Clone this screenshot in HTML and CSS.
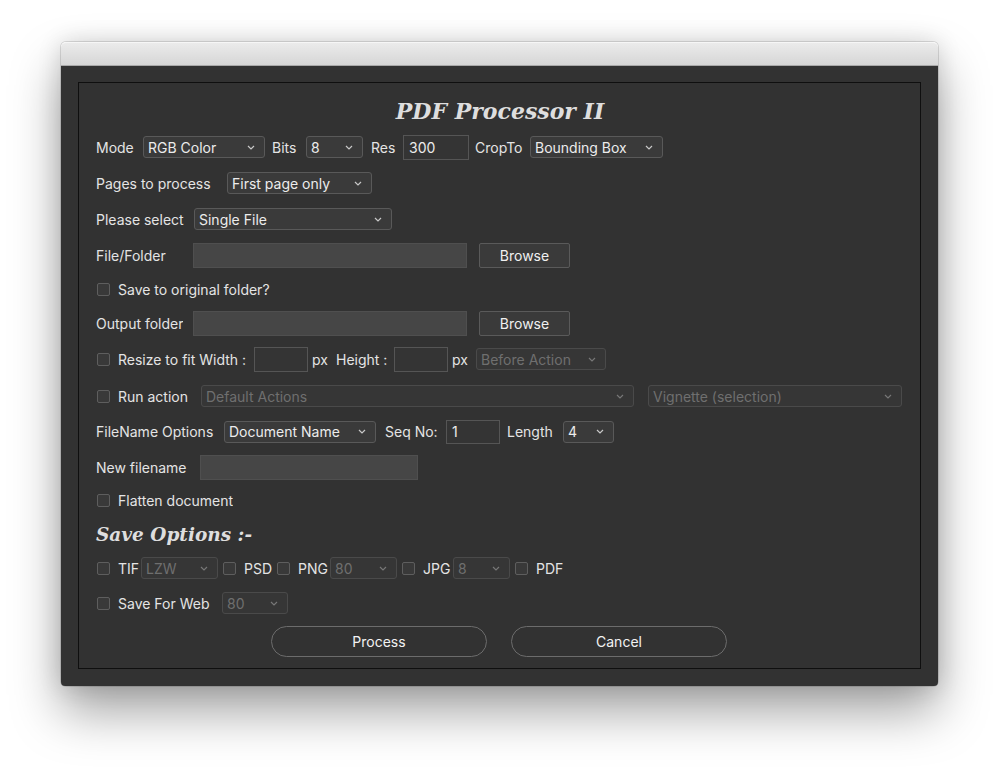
FILE: index.html
```html
<!DOCTYPE html>
<html>
<head>
<meta charset="utf-8">
<link rel="stylesheet" href="styles.css">
</head>
<body>
<div class="window">
  <div class="titlebar"></div>
  <div class="content">
    <div class="panel">
      <h1 class="title">PDF Processor II</h1>

      <div class="row r36">
        <span class="lbl w-mode">Mode</span>
        <div class="select w-rgb"><span class="val">RGB Color</span><svg class="chev" viewBox="0 0 8 5"><path d="M1 1l3 3 3-3"/></svg></div>
        <span class="lbl w-bits">Bits</span>
        <div class="select w-bitsel"><span class="val">8</span><svg class="chev" viewBox="0 0 8 5"><path d="M1 1l3 3 3-3"/></svg></div>
        <span class="lbl w-res">Res</span>
        <div class="field w-resin"><span class="val">300</span></div>
        <span class="lbl w-crop">CropTo</span>
        <div class="select w-cropsel"><span class="val">Bounding Box</span><svg class="chev" viewBox="0 0 8 5"><path d="M1 1l3 3 3-3"/></svg></div>
      </div>

      <div class="row r36">
        <span class="lbl w-pages">Pages to process</span>
        <div class="select w-pagesel"><span class="val">First page only</span><svg class="chev" viewBox="0 0 8 5"><path d="M1 1l3 3 3-3"/></svg></div>
      </div>

      <div class="row r36">
        <span class="lbl w-please">Please select</span>
        <div class="select w-single"><span class="val">Single File</span><svg class="chev" viewBox="0 0 8 5"><path d="M1 1l3 3 3-3"/></svg></div>
      </div>

      <div class="row r36">
        <span class="lbl w-folder">File/Folder</span>
        <div class="field fill w-path"></div>
        <div class="btn">Browse</div>
      </div>

      <div class="row r33">
        <span class="cb"></span><span class="lbl">Save to original folder?</span>
      </div>

      <div class="row r34">
        <span class="lbl w-folder">Output folder</span>
        <div class="field fill w-path"></div>
        <div class="btn">Browse</div>
      </div>

      <div class="row r38">
        <span class="cb"></span><span class="lbl w-resize">Resize to fit Width :</span>
        <div class="field w-dim"></div>
        <span class="lbl w-px">px</span>
        <span class="lbl w-height">Height :</span>
        <div class="field w-dim"></div>
        <span class="lbl w-px">px</span>
        <div class="select off w-before"><span class="val">Before Action</span><svg class="chev" viewBox="0 0 8 5"><path d="M1 1l3 3 3-3"/></svg></div>
      </div>

      <div class="row r36">
        <span class="cb"></span><span class="lbl w-run">Run action</span>
        <div class="select off w-actions"><span class="val">Default Actions</span><svg class="chev" viewBox="0 0 8 5"><path d="M1 1l3 3 3-3"/></svg></div>
        <div class="select off w-vignette"><span class="val">Vignette (selection)</span><svg class="chev" viewBox="0 0 8 5"><path d="M1 1l3 3 3-3"/></svg></div>
      </div>

      <div class="row r35">
        <span class="lbl w-fname">FileName Options</span>
        <div class="select w-docname"><span class="val">Document Name</span><svg class="chev" viewBox="0 0 8 5"><path d="M1 1l3 3 3-3"/></svg></div>
        <span class="lbl w-seq">Seq No:</span>
        <div class="field w-seqin"><span class="val">1</span></div>
        <span class="lbl w-len">Length</span>
        <div class="select w-lensel"><span class="val">4</span><svg class="chev" viewBox="0 0 8 5"><path d="M1 1l3 3 3-3"/></svg></div>
      </div>

      <div class="row r36">
        <span class="lbl w-newname">New filename</span>
        <div class="field fill w-newin"></div>
      </div>

      <div class="row r30">
        <span class="cb"></span><span class="lbl">Flatten document</span>
      </div>

      <h2 class="subtitle">Save Options :-</h2>

      <div class="row r30">
        <span class="cb"></span><span class="lbl w-tif">TIF</span>
        <div class="select off w-lzw"><span class="val">LZW</span><svg class="chev" viewBox="0 0 8 5"><path d="M1 1l3 3 3-3"/></svg></div>
        <span class="cb after"></span><span class="lbl w-psd">PSD</span>
        <span class="cb"></span><span class="lbl w-png">PNG</span>
        <div class="select off w-pngsel"><span class="val">80</span><svg class="chev" viewBox="0 0 8 5"><path d="M1 1l3 3 3-3"/></svg></div>
        <span class="cb after"></span><span class="lbl w-jpg">JPG</span>
        <div class="select off w-jpgsel"><span class="val">8</span><svg class="chev" viewBox="0 0 8 5"><path d="M1 1l3 3 3-3"/></svg></div>
        <span class="cb after"></span><span class="lbl">PDF</span>
      </div>

      <div class="row r40">
        <span class="cb"></span><span class="lbl w-web">Save For Web</span>
        <div class="select off w-websel"><span class="val">80</span><svg class="chev" viewBox="0 0 8 5"><path d="M1 1l3 3 3-3"/></svg></div>
      </div>

      <div class="actions">
        <div class="pill">Process</div>
        <div class="pill">Cancel</div>
      </div>
    </div>
  </div>
</div>
</body>
</html>
```

FILE: styles.css
```css
* { box-sizing: border-box; }

html, body {
  margin: 0;
  padding: 0;
  background: #ffffff;
}

body {
  font-family: "Inter", "Liberation Sans", sans-serif;
  font-size: 14px;
  color: #e4e4e4;
  width: 999px;
  height: 767px;
  overflow: hidden;
}

.window {
  margin: 42px 0 0 61px;
  width: 877px;
  height: 644px;
  border-radius: 5px;
  box-shadow: 0 26px 50px rgba(0, 0, 0, 0.36), 0 0 24px rgba(0, 0, 0, 0.14), 0 0 0 1px rgba(0, 0, 0, 0.12);
  display: flex;
  flex-direction: column;
}

.titlebar {
  height: 24px;
  border-radius: 5px 5px 0 0;
  background: linear-gradient(#ebebeb, #d6d6d6);
  border-top: 1px solid #f6f6f6;
  border-bottom: 1px solid #a9a9a9;
}

.content {
  flex: 1;
  background: #323232;
  border-radius: 0 0 4px 4px;
  padding: 16px 17px 17px 17px;
  display: flex;
}

.panel {
  flex: 1;
  border: 1px solid #0f0f0f;
  padding: 14px 16px 0 17px;
  display: flex;
  flex-direction: column;
}

.title {
  margin: 0 0 4px 0;
  height: 28px;
  line-height: 28px;
  text-align: center;
  font-family: "DejaVu Serif", serif;
  font-style: italic;
  font-weight: bold;
  font-size: 22px;
  color: #dedede;
}

.subtitle {
  margin: 0;
  height: 38px;
  line-height: 40px;
  font-family: "DejaVu Serif", serif;
  font-style: italic;
  font-weight: bold;
  font-size: 18.5px;
  color: #dedede;
}

.row {
  display: flex;
  align-items: center;
  white-space: nowrap;
}
.r30 { height: 30px; }
.r33 { height: 33px; }
.r34 { height: 34px; }
.r35 { height: 35px; }
.r36 { height: 36px; }
.r38 { height: 38px; }
.r40 { height: 40px; }

.lbl {
  display: inline-block;
  white-space: nowrap;
  overflow: hidden;
  flex: none;
}

.w-mode { width: 47px; }
.w-bits { width: 34px; margin-left: 7px; }
.w-res { width: 32px; margin-left: 8px; }
.w-crop { width: 55px; margin-left: 6px; }
.w-pages { width: 131px; }
.w-please { width: 98px; }
.w-folder { width: 87px; margin-right: 10px; }
.w-resize { width: 136px; }
.w-px { width: 24px; margin-left: 4px; }
.w-height { width: 58px; }
.w-run { width: 83px; }
.w-fname { width: 128px; }
.w-seq { width: 61px; margin-left: 9px; }
.w-len { width: 56px; margin-left: 7px; }
.w-newname { width: 104px; }
.w-tif { width: 23px; }
.w-psd { width: 32px; }
.w-png { width: 32px; }
.w-jpg { width: 30px; }
.w-web { width: 104px; }

.select {
  flex: none;
  height: 22px;
  display: flex;
  align-items: center;
  padding: 0 9px 0 4px;
  background: #3a3a3a;
  border: 1px solid #595959;
  border-radius: 3px;
  color: #ececec;
}
.select .val {
  flex: 1;
  overflow: hidden;
}
.chev {
  width: 8px;
  height: 5px;
  flex: none;
  fill: none;
  stroke: #c8c8c8;
  stroke-width: 1.2;
}
.select.off {
  background: #363636;
  border-color: #4a4a4a;
  color: #6f6f6f;
}
.select.off .chev { stroke: #777777; }

.w-rgb { width: 122px; }
.w-bitsel { width: 57px; }
.w-cropsel { width: 133px; }
.w-pagesel { width: 145px; }
.w-single { width: 198px; }
.w-before { width: 130px; margin-left: 0; }
.w-actions { width: 433px; }
.w-vignette { width: 254px; margin-left: 14px; }
.w-docname { width: 152px; }
.w-lensel { width: 51px; }
.w-lzw { width: 77px; margin-left: 0; }
.w-pngsel { width: 67px; }
.w-jpgsel { width: 57px; }
.w-websel { width: 66px; }

.field {
  flex: none;
  height: 25px;
  display: flex;
  align-items: center;
  padding: 0 5px;
  background: #343434;
  border: 1px solid #555555;
  color: #ececec;
}
.field.fill {
  background: #464646;
  border-color: #4f4f4f;
}
.w-resin { width: 66px; }
.w-path { width: 274px; }
.w-dim { width: 54px; }
.w-seqin { width: 54px; height: 24px; }
.w-newin { width: 218px; }

.btn {
  flex: none;
  width: 91px;
  height: 25px;
  margin-left: 12px;
  display: flex;
  align-items: center;
  justify-content: center;
  background: #3a3a3a;
  border: 1px solid #5a5a5a;
  border-radius: 2px;
  color: #f0f0f0;
}

.cb {
  flex: none;
  width: 13px;
  height: 13px;
  margin: 0 8px 0 1px;
  background: #393939;
  border: 1px solid #5e5e5e;
  border-radius: 2px;
}
.cb.after { margin-left: 5px; }

.actions {
  display: flex;
  gap: 24px;
  margin: 3px 0 0 175px;
}
.pill {
  width: 216px;
  height: 31px;
  display: flex;
  align-items: center;
  justify-content: center;
  border: 1px solid #6c6c6c;
  border-radius: 16px;
  color: #f2f2f2;
}
```
